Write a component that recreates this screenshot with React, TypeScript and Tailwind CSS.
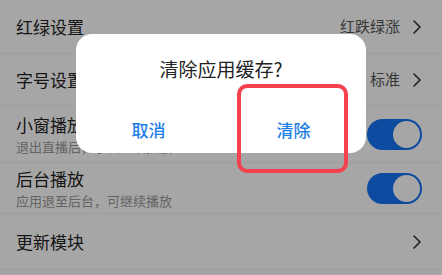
const font = { fontFamily: '"Noto Sans CJK SC", "Noto Sans", sans-serif' };

const Chevron = () => (
  <svg width="10" height="16" viewBox="0 0 10 16" className="ml-3">
    <path d="M2 2l6 6-6 6" fill="none" stroke="#333" strokeWidth="1.6" strokeLinecap="round" strokeLinejoin="round" />
  </svg>
);

const Toggle = () => (
  <div className="flex h-[31px] w-[55px] items-center justify-end rounded-full bg-[#1573f7] p-[2px]">
    <div className="h-[27px] w-[27px] rounded-full bg-white" />
  </div>
);

const Row = ({ title, value, sub, toggle, h }: { title: string; value?: string; sub?: string; toggle?: boolean; h: string }) => (
  <div className={`flex items-center justify-between border-b border-[#f3f3f3] pl-4 pr-5 ${h}`}>
    <div className="flex flex-col">
      <span className="text-[17px] leading-[24px] text-[#222]">{title}</span>
      {sub && <span className="mt-[1px] text-[13px] leading-[18px] text-[#9a9a9a]">{sub}</span>}
    </div>
    {toggle ? (
      <Toggle />
    ) : (
      <div className="flex items-center">
        {value && <span className="text-[15px] text-[#555]">{value}</span>}
        <Chevron />
      </div>
    )}
  </div>
);

export default function App() {
  return (
    <div className="relative h-[275px] w-[442px] overflow-hidden bg-white" style={font}>
      <Row title="红绿设置" value="红跌绿涨" h="h-[54px]" />
      <Row title="字号设置" value="标准" h="h-[52px]" />
      <Row title="小窗播放" sub="退出直播后，小窗继续播放" toggle h="h-[57px]" />
      <Row title="后台播放" sub="应用退至后台，可继续播放" toggle h="h-[51px]" />
      <Row title="更新模块" h="h-[56px]" />

      <div className="absolute inset-0 bg-black/35" />

      <div className="absolute left-[76px] top-[34px] flex h-[119px] w-[290px] flex-col rounded-[16px] bg-white">
        <div className="pt-[21px] text-center text-[19px] leading-[28px] text-[#222]">清除应用缓存?</div>
        <div className="mt-auto flex pb-[11px]">
          <span className="flex-1 text-center text-[17px] font-medium leading-[24px] text-[#1f7fe6]">取消</span>
          <span className="flex-1 text-center text-[17px] font-medium leading-[24px] text-[#1f7fe6]">清除</span>
        </div>
      </div>

      <div className="absolute left-[237px] top-[84px] h-[89px] w-[111px] rounded-[10px] border-4 border-[#f3414e]" />
    </div>
  );
}
